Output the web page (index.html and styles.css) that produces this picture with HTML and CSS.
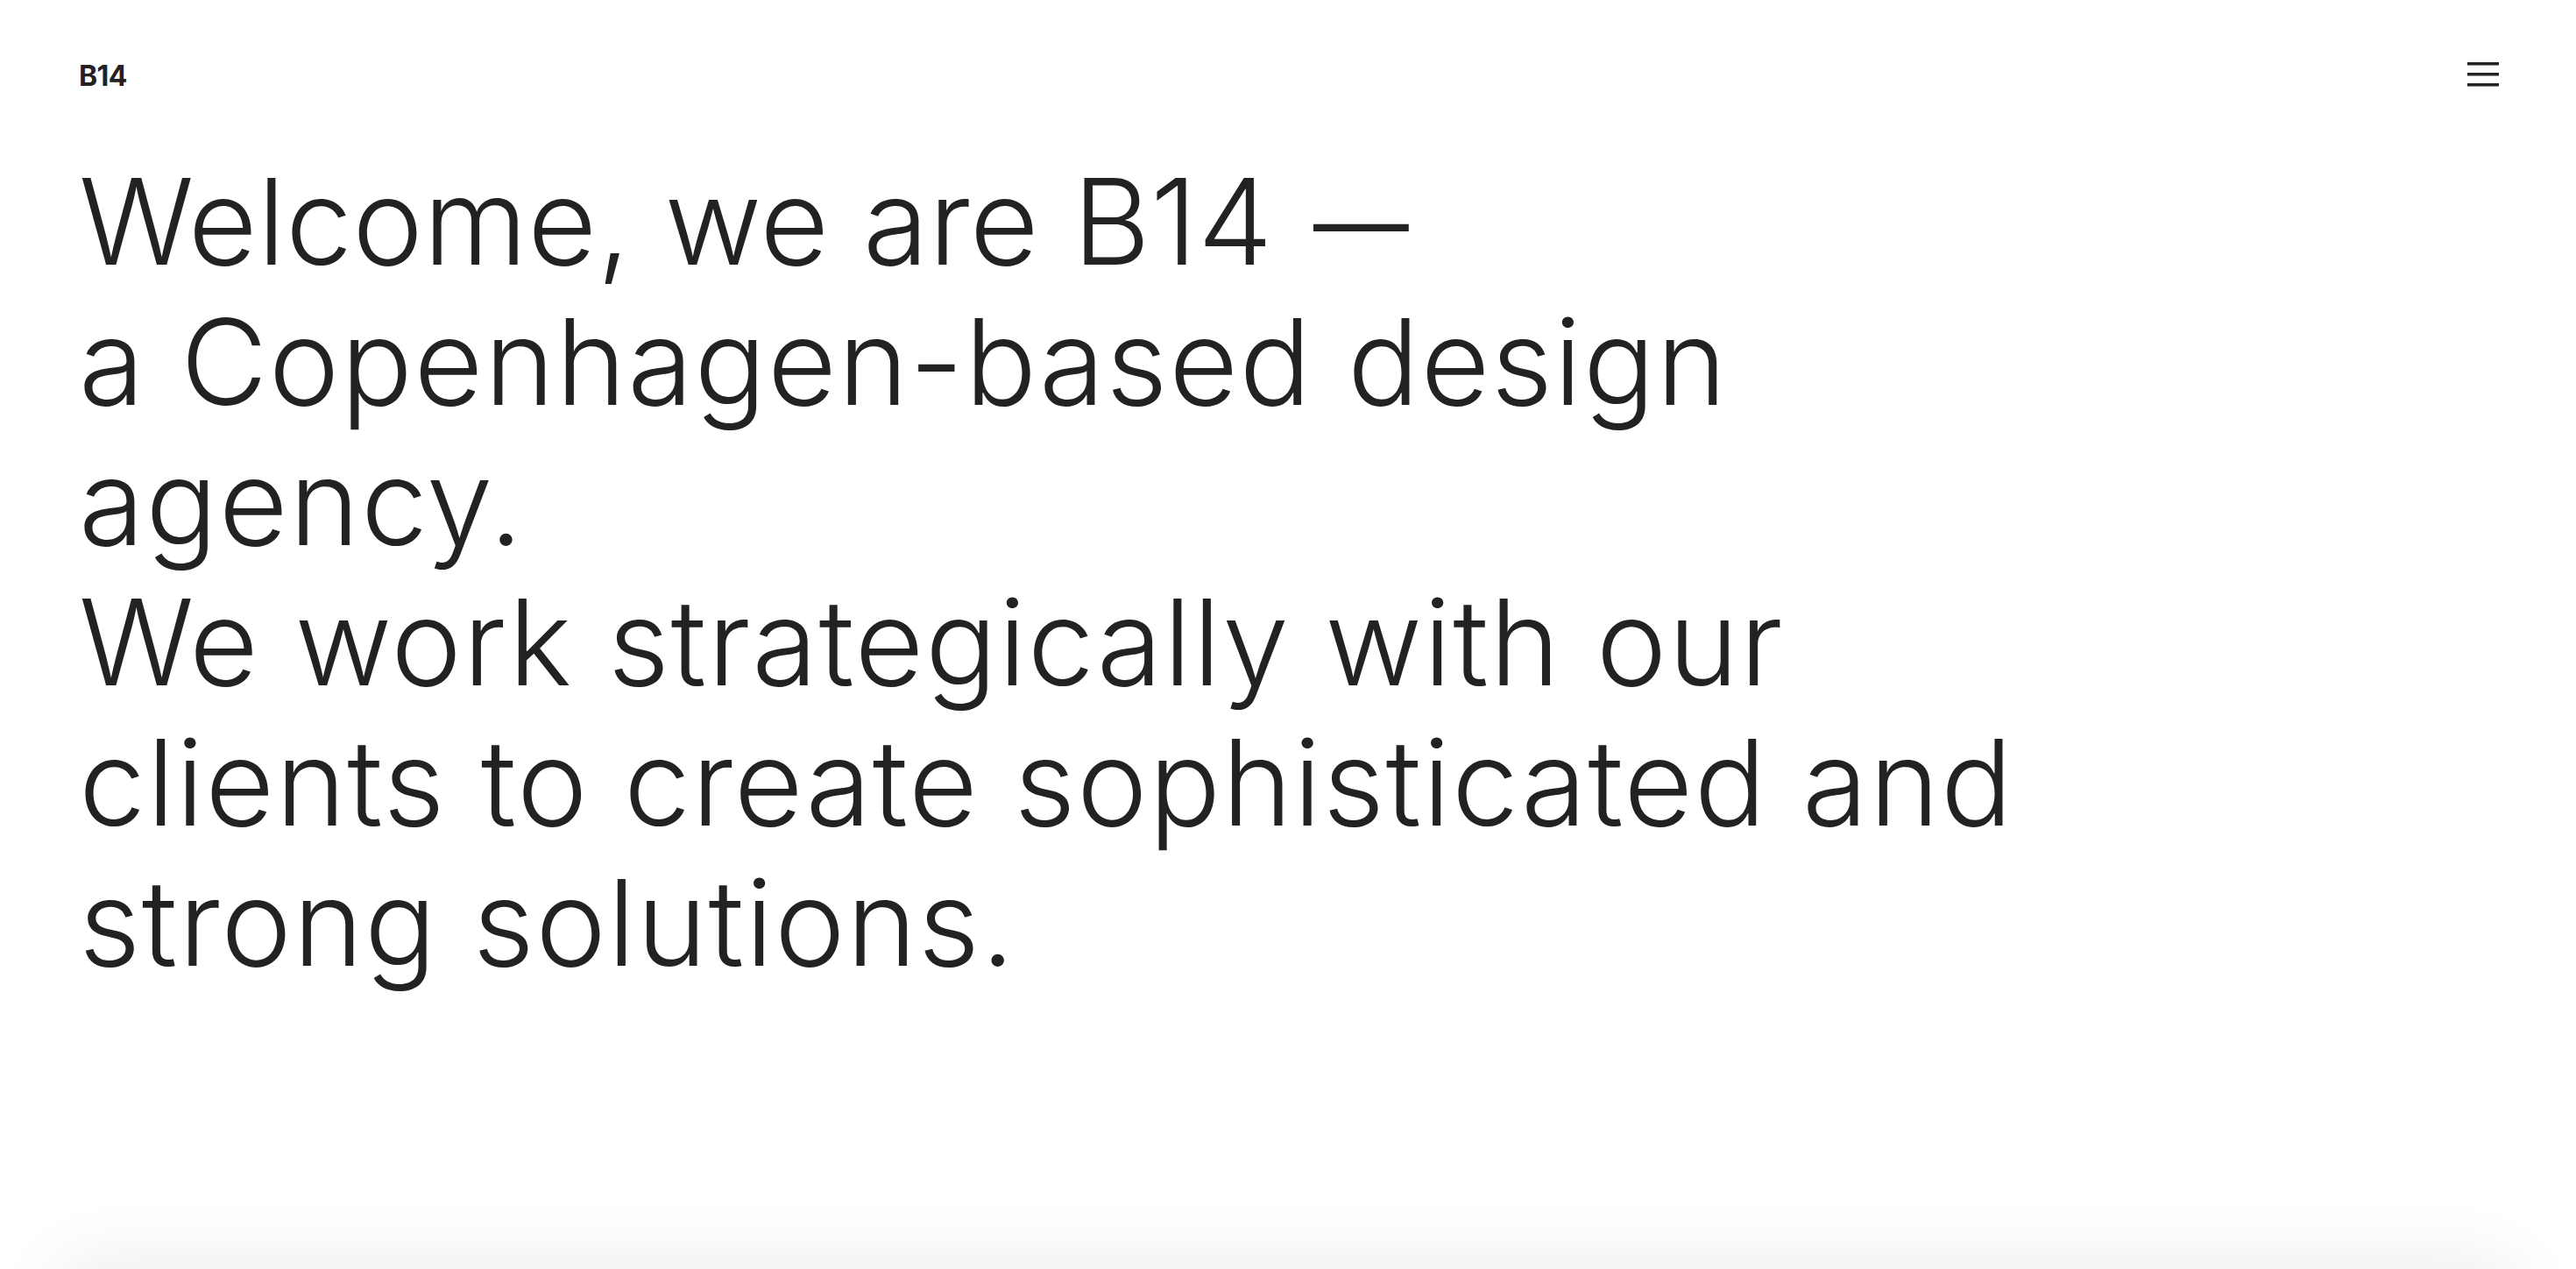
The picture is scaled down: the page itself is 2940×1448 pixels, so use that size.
FILE: index.html
```html
<!DOCTYPE html>
<html lang="en">
<head>
<meta charset="utf-8">
<title>B14</title>
<link rel="stylesheet" href="styles.css">
</head>
<body>
<div class="page">
  <header class="header">
    <a class="logo" href="#">B14</a>
    <button class="menu" aria-label="Menu">
      <svg width="36" height="28" viewBox="0 0 36 28"><rect x="0" y="0" width="36" height="3.5" fill="#222"/><rect x="0" y="12" width="36" height="3.5" fill="#222"/><rect x="0" y="24" width="36" height="3.5" fill="#222"/></svg>
    </button>
  </header>
  <main class="hero">
    <h1 class="intro"><span class="lead">Welcome, we are B14</span> <span class="dash">—</span><br>a Copenhagen-based design<br>agency.<br>We work strategically with our<br>clients to create sophisticated and<br>strong solutions.</h1>
  </main>
</div>
<section class="next"></section>
</body>
</html>
```
FILE: styles.css
```css
html, body {
  margin: 0;
  padding: 0;
  background: #fff;
}
body {
  font-family: Inter, "Liberation Sans", sans-serif;
  color: #222;
}
.page {
  height: 1448px;
  box-sizing: border-box;
}
.header {
  display: flex;
  justify-content: space-between;
  align-items: flex-start;
  padding: 71px 88px 0 90px;
}
.logo {
  font-size: 32px;
  line-height: 32px;
  font-weight: 700;
  color: #222;
  text-decoration: none;
  letter-spacing: -0.6px;
}
.menu {
  background: none;
  border: 0;
  padding: 0;
  margin: 0;
  display: block;
  line-height: 0;
}
.hero {
  padding: 0 90px;
  margin-top: 70px;
}
.intro {
  margin: 0;
  font-size: 136px;
  line-height: 160px;
  font-weight: 300;
  letter-spacing: 1.6px;
}
.lead {
  letter-spacing: 0.3px;
}
.dash {
  display: inline-block;
  transform: scaleX(0.8);
  transform-origin: 0 50%;
  margin-left: 6px;
}
.next {
  margin: 0 60px;
  height: 400px;
  border-radius: 60px 60px 0 0;
  background: #fff;
  box-shadow: 0 -10px 80px rgba(0,0,0,0.08);
}
```
